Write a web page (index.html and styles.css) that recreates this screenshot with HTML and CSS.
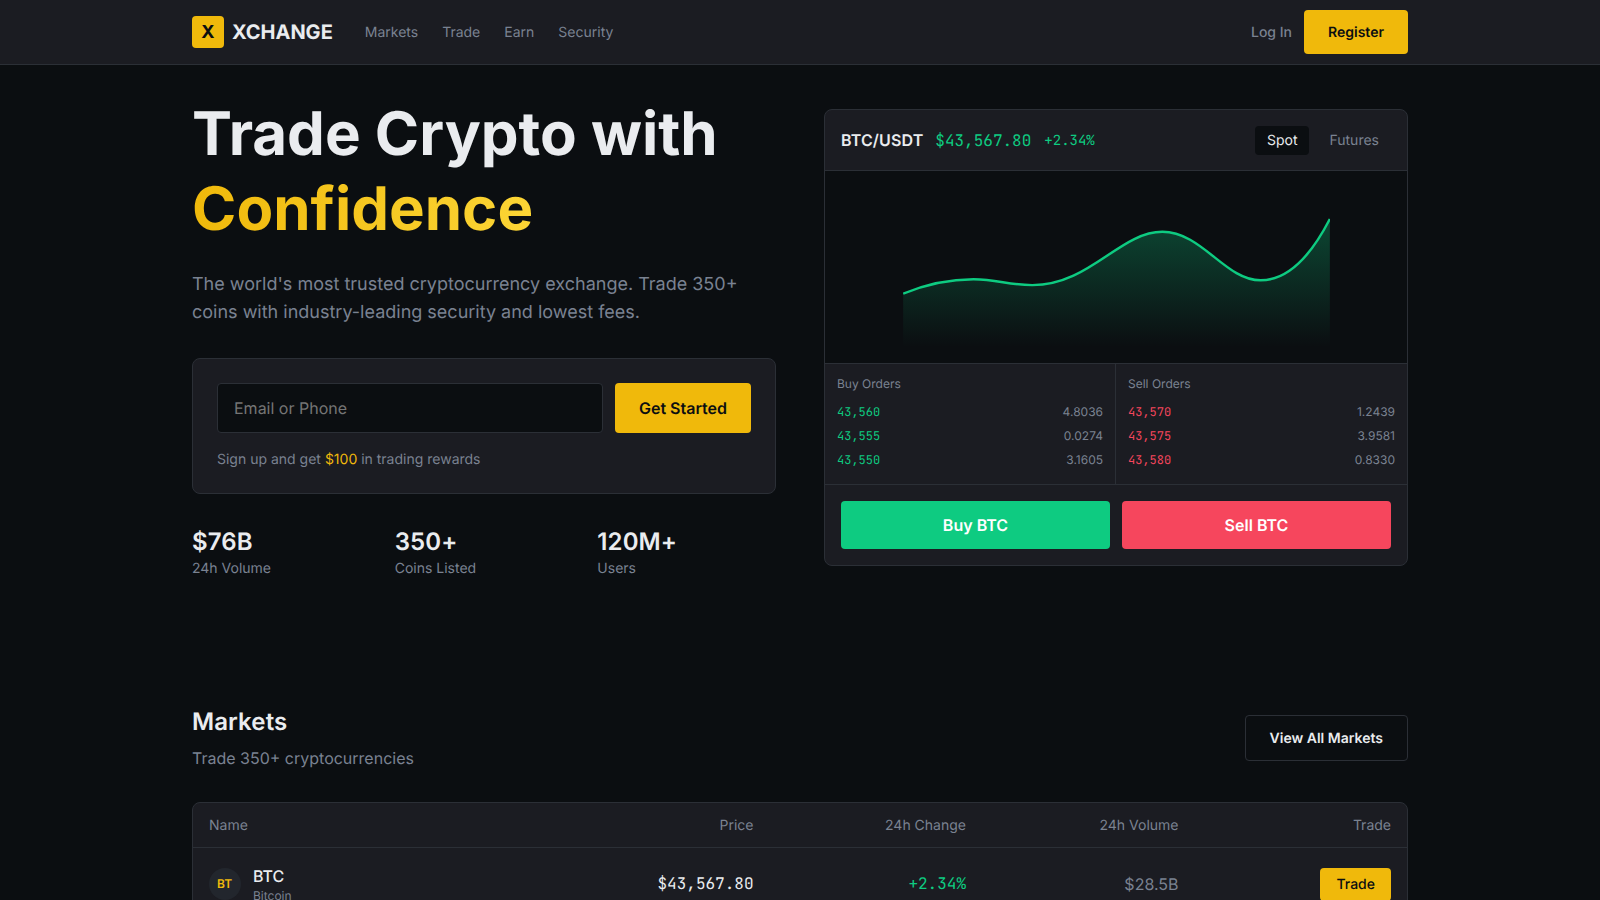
FILE: index.html
```html
<!DOCTYPE html>
<html lang="en">
<head>
<meta charset="utf-8">
<title>XCHANGE</title>
<link rel="stylesheet" href="styles.css">
</head>
<body>
<header class="nav">
  <div class="container nav-inner">
    <div class="nav-left">
      <a class="logo"><span class="logo-mark">X</span><span class="logo-text">XCHANGE</span></a>
      <nav class="nav-links"><a>Markets</a><a>Trade</a><a>Earn</a><a>Security</a></nav>
    </div>
    <div class="nav-right"><a class="login">Log In</a><button class="btn btn-primary">Register</button></div>
  </div>
</header>
<main>
  <section class="container hero">
    <div class="hero-left">
      <h1>Trade Crypto with <span class="grad">Confidence</span></h1>
      <p class="lead">The world's most trusted cryptocurrency exchange. Trade 350+ coins with industry-leading security and lowest fees.</p>
      <div class="signup">
        <div class="signup-row">
          <input class="signup-input" placeholder="Email or Phone">
          <button class="btn btn-primary btn-lg">Get Started</button>
        </div>
        <p class="signup-note">Sign up and get <span class="gold">$100</span> in trading rewards</p>
      </div>
      <div class="stats">
        <div><div class="stat-value">$76B</div><div class="stat-label">24h Volume</div></div>
        <div><div class="stat-value">350+</div><div class="stat-label">Coins Listed</div></div>
        <div><div class="stat-value">120M+</div><div class="stat-label">Users</div></div>
      </div>
    </div>
    <div class="card">
      <div class="card-head">
        <div class="pair"><span class="pair-name">BTC/USDT</span><span class="pair-price mono">$43,567.80</span><span class="pair-change mono">+2.34%</span></div>
        <div class="tabs"><span class="tab active">Spot</span><span class="tab">Futures</span></div>
      </div>
      <div class="chart">
        <svg class="chart-svg" viewBox="0 0 400 150" aria-hidden="true">
          <defs><linearGradient id="area" x1="0" y1="0" x2="0" y2="1"><stop offset="0" stop-color="#0ecb81" stop-opacity=".3"/><stop offset="1" stop-color="#0ecb81" stop-opacity="0"/></linearGradient></defs>
          <path fill="url(#area)" d="M0 100C22 91 44 86.5 66 86.5C88 86.5 99 92 121 92C175 92 203 42 243 42C280 42 302 87.5 335 87.5C360 87.5 382 65 400 30V150H0Z"/>
          <path fill="none" stroke="#0ecb81" stroke-width="2.3" d="M0 100C22 91 44 86.5 66 86.5C88 86.5 99 92 121 92C175 92 203 42 243 42C280 42 302 87.5 335 87.5C360 87.5 382 65 400 30"/>
        </svg>
      </div>
      <div class="books">
        <div class="book">
          <div class="book-title">Buy Orders</div>
          <div class="book-row"><span class="mono up">43,560</span><span>4.8036</span></div>
          <div class="book-row"><span class="mono up">43,555</span><span>0.0274</span></div>
          <div class="book-row"><span class="mono up">43,550</span><span>3.1605</span></div>
        </div>
        <div class="book">
          <div class="book-title">Sell Orders</div>
          <div class="book-row"><span class="mono down">43,570</span><span>1.2439</span></div>
          <div class="book-row"><span class="mono down">43,575</span><span>3.9581</span></div>
          <div class="book-row"><span class="mono down">43,580</span><span>0.8330</span></div>
        </div>
      </div>
      <div class="actions"><button class="btn-trade buy">Buy BTC</button><button class="btn-trade sell">Sell BTC</button></div>
    </div>
  </section>
  <section class="container markets">
    <div class="markets-head">
      <div><h2>Markets</h2><p class="markets-sub">Trade 350+ cryptocurrencies</p></div>
      <button class="btn btn-ghost">View All Markets</button>
    </div>
    <div class="table">
      <div class="t-row t-head"><span>Name</span><span>Price</span><span>24h Change</span><span>24h Volume</span><span>Trade</span></div>
      <div class="t-row">
        <div class="coin"><span class="coin-icon">BT</span><div><div class="coin-sym">BTC</div><div class="coin-name">Bitcoin</div></div></div>
        <span class="mono t-price">$43,567.80</span><span class="mono up t-change">+2.34%</span><span class="t-vol">$28.5B</span>
        <div><button class="btn-small">Trade</button></div>
      </div>
    </div>
  </section>
</main>
</body>
</html>
```
FILE: styles.css
```css
*{box-sizing:border-box;margin:0;padding:0}
html,body{background:#0b0e11}
body{font-family:Inter,"Liberation Sans",sans-serif;color:#eaecef;height:900px;overflow:hidden;text-rendering:geometricPrecision}
button{font-family:inherit;border:0;cursor:pointer;text-rendering:geometricPrecision}
.container{width:1216px;margin:0 auto}
.mono{font-family:"JetBrains Mono","DejaVu Sans Mono",monospace}
.up{color:#0ecb81}.down{color:#f6465d}.gold{color:#f0b90b}
.nav{background:#1b1c22;border-bottom:1px solid #2b2f36;height:65px}
.nav-inner{display:flex;align-items:center;justify-content:space-between;height:64px}
.nav-left{display:flex;align-items:center;gap:32px}
.logo{display:flex;align-items:center;gap:8px}
.logo-mark{width:32px;height:32px;border-radius:4px;background:#f0b90b;color:#0b0e11;display:flex;align-items:center;justify-content:center;font-weight:700;font-size:18px}
.logo-text{font-size:20px;font-weight:700}
.nav-links{display:flex;gap:24px;font-size:14px;color:#7a8291;font-weight:400}
.nav-right{display:flex;align-items:center;gap:12px}
.login{font-size:14px;color:#7a8291;font-weight:500}
.btn{font-size:14px;font-weight:600;padding:13px 24px 11px;border-radius:4px;line-height:20px}
.btn-primary{background:#f0b90b;color:#0b0e11}
.btn-lg{font-size:16px;line-height:24px;padding:12px 24px;height:50px;flex:none}
.btn-ghost{background:transparent;border:1px solid #2b2f36;color:#eaecef}
.hero{display:grid;grid-template-columns:1fr 1fr;gap:48px;padding-top:32px;align-items:start}
h1{font-size:60px;line-height:75px;font-weight:700;margin-bottom:24px}
.grad{display:block;background:linear-gradient(90deg,#f0b90b,#fcd535);-webkit-background-clip:text;background-clip:text;color:transparent;width:fit-content}
.lead{font-size:18px;line-height:28px;color:#7a8291;margin-bottom:31px}
.signup{background:#1b1c22;border:1px solid #2b2f36;border-radius:8px;padding:24px 24px 23px}
.signup-row{display:flex;gap:12px;margin-bottom:17px}
.signup-input{flex:1;height:50px;background:#0b0e11;border:1px solid #2b2f36;border-radius:4px;padding:0 16px;font:16px Inter,sans-serif;color:#eaecef;min-width:0;text-rendering:geometricPrecision}
.signup-note{font-size:14px;line-height:20px;color:#7a8291}
.stats{display:grid;grid-template-columns:repeat(3,1fr);gap:24px;margin-top:32px}
.stat-value{font-size:24px;font-weight:600;line-height:32px;margin-bottom:1px;letter-spacing:.1px}
.stat-label{font-size:14px;line-height:20px;color:#7a8291}
.card{background:#1b1c22;border:1px solid #2b2f36;border-radius:8px;overflow:hidden;margin-top:12px}
.card-head{display:flex;align-items:center;justify-content:space-between;padding:16px;border-bottom:1px solid #2b2f36;height:61px}
.pair{display:flex;align-items:center;gap:12px}
.pair-name{font-size:16px;font-weight:600;letter-spacing:.12px}
.pair-price{font-size:16px;color:#0ecb81}
.pair-change{font-size:14px;color:#0ecb81;margin:2px 0 0 1px}
.tabs{display:flex;gap:8px;font-size:14px;line-height:17px;color:#7a8291}
.tab{padding:6px 12px;border-radius:4px}
.tab.active{background:#0b0e11;color:#eaecef}
.chart{height:192px;background:#0b0e11;padding:16px 0;display:flex;justify-content:center}
.chart-svg{display:block;width:427px;height:160px}
.books{display:grid;grid-template-columns:1fr 1fr;border-top:1px solid #2b2f36;border-bottom:1px solid #2b2f36}
.book{padding:12px}
.book:first-child{border-right:1px solid #2b2f36}
.book-title{font-size:12px;line-height:16px;color:#7a8291;margin-bottom:8px}
.book-row{display:flex;justify-content:space-between;font-size:12px;line-height:16px;color:#7a8291;padding:4px 0}
.actions{display:grid;grid-template-columns:1fr 1fr;gap:12px;padding:16px}
.btn-trade{height:48px;border-radius:4px;font-size:16px;font-weight:600;color:#fff}
.buy{background:#0ecb81}.sell{background:#f6465d}
.markets{padding-top:127px}
.markets-head{display:flex;justify-content:space-between;align-items:center;margin-bottom:32px}
h2{font-size:24px;line-height:32px;font-weight:600;margin-bottom:8px;letter-spacing:.1px}
.markets-sub{font-size:16px;line-height:24px;color:#7a8291}
.table{background:#1b1c22;border:1px solid #2b2f36;border-radius:8px;overflow:hidden}
.t-row{display:grid;grid-template-columns:332px repeat(4,1fr);padding:16px;align-items:center;text-align:right}
.t-row>:first-child{text-align:left}
.t-head{font-size:14px;line-height:12px;color:#7a8291;border-bottom:1px solid #2b2f36;padding:17px 16px 15px}
.coin{display:flex;align-items:center;gap:12px}
.coin-icon{width:32px;height:32px;border-radius:50%;background:#22262d;color:#f0b90b;font-size:12px;font-weight:600;display:flex;align-items:center;justify-content:center;padding:0 1px 2px 0}
.coin-sym{font-size:16px;font-weight:500;line-height:24px}
.coin-name{font-size:12px;line-height:16px;color:#7a8291}
.t-price,.t-change{font-size:16px;padding-bottom:2px}
.t-vol{font-size:16px;color:#7a8291}
.btn-small{background:#f0b90b;color:#0b0e11;font-size:14px;font-weight:500;padding:8px 16px;border-radius:4px}
```
